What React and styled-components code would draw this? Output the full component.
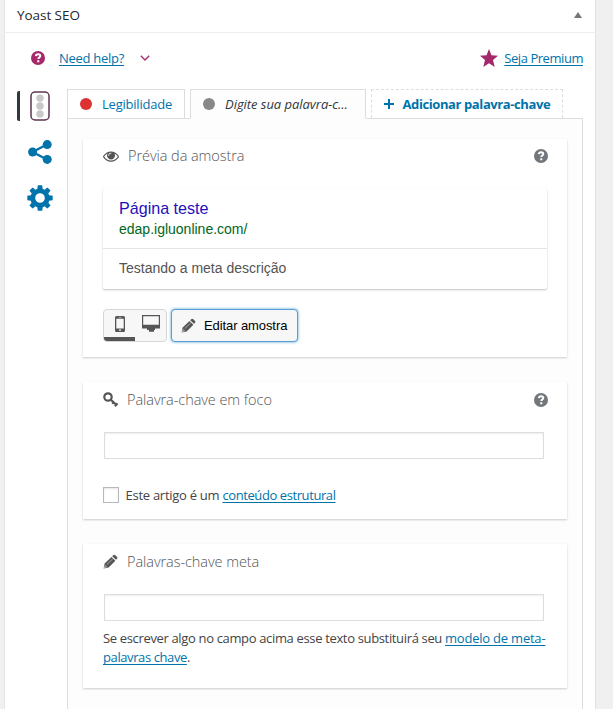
import React from 'react';
import styled, { createGlobalStyle, css } from 'styled-components';

const GlobalStyle = createGlobalStyle`
  * { box-sizing: border-box; }
  html, body { margin: 0; padding: 0; background: #f0f0f1; }
  body { font-family: "Open Sans", "Noto Sans", sans-serif; font-size: 13px; color: #444; overflow: hidden; }
`;

const Metabox = styled.section`
  display: flex;
  flex-direction: column;
  width: 592px;
  height: 709px;
  margin-left: 4px;
  background: #fff;
  border-left: 1px solid #e5e5e5;
  border-right: 1px solid #e2e2e2;
  overflow: hidden;
`;

const Header = styled.header`
  display: flex;
  flex: none;
  align-items: center;
  justify-content: space-between;
  height: 33px;
  padding: 0 13px 2px 12px;
  border-bottom: 1px solid #eee;
`;

const Title = styled.h2`
  margin: 0;
  font-size: 13.5px;
  font-weight: 400;
  line-height: 20px;
  letter-spacing: -0.05px;
  color: #23282d;
`;

const HelpBar = styled.div`
  display: flex;
  flex: none;
  align-items: center;
  height: 56px;
  padding: 0 12px 6px 26px;
`;

const HelpLinkGroup = styled.div`
  display: flex;
  align-items: center;
  margin-right: auto;
  gap: 14px;
`;

const PremiumGroup = styled.div`
  display: flex;
  align-items: center;
  gap: 6px;
`;

const Link = styled.a`
  color: #0073aa;
  font-size: 13px;
  line-height: 19px;
  letter-spacing: ${(p) => p.$spacing || 0}px;
  text-decoration: underline;
  text-underline-offset: 2px;
  text-decoration-thickness: 1px;
  text-decoration-skip-ink: none;
  white-space: nowrap;
`;

const Icon = styled.svg`
  display: block;
  flex: none;
  width: ${(p) => p.$w}px;
  height: ${(p) => p.$h || p.$w}px;
  color: ${(p) => p.$color || '#555'};
  fill: currentColor;
`;

const Body = styled.div`
  display: flex;
  flex: 1;
`;

const Sidebar = styled.nav`
  display: flex;
  flex: none;
  flex-direction: column;
  width: 62px;
  padding-top: 2px;
`;

const SidebarItem = styled.div`
  display: flex;
  align-items: center;
  justify-content: center;
  height: 30px;
  margin: 0 15px 16px 12px;
  padding-left: ${(p) => (p.$active ? 7 : 10)}px;
  border-left: ${(p) => (p.$active ? '3px solid #32373c' : '0')};
  border-radius: 2px 0 0 2px;
`;

const Main = styled.main`
  display: flex;
  flex: none;
  flex-direction: column;
  width: 516px;
`;

const TabBar = styled.div`
  display: flex;
  height: 30px;
  gap: 5px;
`;

const Tab = styled.div`
  display: flex;
  align-items: center;
  width: ${(p) => p.$width}px;
  height: 30px;
  padding: 0 0 0 12px;
  border: 1px solid #ddd;
  color: #0073aa;
  letter-spacing: ${(p) => p.$spacing || 0}px;
  white-space: nowrap;
  ${(p) => p.$kind === 'active' && css`
    border-bottom-color: #fdfdfd;
    background: #fdfdfd;
    color: #32373c;
    font-style: italic;
  `}
  ${(p) => p.$kind === 'add' && css`
    border-style: dashed;
    border-bottom: 0;
    height: 29px;
    font-weight: 700;
  `}
`;

const StatusDot = styled.span`
  width: 12px;
  height: 12px;
  margin-right: 10px;
  border-radius: 50%;
  background: ${(p) => p.$color};
`;

const TabLabel = styled.span`
  margin-left: ${(p) => p.$gap || 0}px;
`;

const Panel = styled.div`
  display: flex;
  flex: 1;
  flex-direction: column;
  gap: 25px;
  margin-top: -1px;
  padding: 20px 15px 0;
  border: 1px solid #ddd;
  border-bottom: 0;
  background: #fdfdfd;
`;

const TabBarLayer = styled.div`
  position: relative;
  z-index: 1;
`;

const Card = styled.section`
  height: ${(p) => p.$height}px;
  padding: 0 20px;
  background: #fff;
  box-shadow: 0 1px 2px rgba(0, 0, 0, 0.2);
`;

const CardHeader = styled.div`
  display: flex;
  align-items: center;
  height: ${(p) => p.$height || 35}px;
  margin-right: -1px;
`;

const CardTitle = styled.h3`
  flex: 1;
  margin: 0 0 0 ${(p) => p.$gap}px;
  color: #555;
  font-size: 14.5px;
  font-weight: 300;
  line-height: 22px;
  letter-spacing: -0.06px;
`;

const Snippet = styled.div`
  height: 101px;
  margin-top: 16px;
  border-radius: 2px;
  background: #fff;
  box-shadow: 0 1px 2px rgba(0, 0, 0, 0.24);
  font-family: "Liberation Sans", Arial, sans-serif;
`;

const SnippetTop = styled.div`
  height: 61px;
  padding: 11px 16px 0;
  border-bottom: 1px solid #e5e5e5;
`;

const SnippetTitle = styled.div`
  color: #1e0fbe;
  font-size: 16.1px;
  line-height: 18px;
`;

const SnippetUrl = styled.div`
  color: #006621;
  font-size: 14px;
  line-height: 20px;
  margin-top: 2px;
`;

const SnippetDescription = styled.div`
  padding: 9px 16px;
  color: #545454;
  font-size: 14px;
  line-height: 20px;
`;

const Actions = styled.div`
  display: flex;
  gap: 4px;
  margin-top: 20px;
`;

const DeviceSwitch = styled.div`
  display: flex;
  width: 64px;
  height: 33px;
  border: 1px solid #d6d6d6;
  border-radius: 4px;
  background: #f7f7f7;
  overflow: hidden;
`;

const DeviceButton = styled.div`
  display: flex;
  flex: 1;
  align-items: center;
  justify-content: center;
  height: 31px;
  border-bottom: 4px solid ${(p) => (p.$active ? '#555' : 'transparent')};
`;

const EditButton = styled.button`
  display: flex;
  align-items: center;
  gap: 8px;
  width: 127px;
  height: 33px;
  padding: 0 0 0 9px;
  border: 1px solid #5b9dd9;
  border-radius: 4px;
  background: #f7f7f7;
  box-shadow: 0 0 3px rgba(30, 140, 190, 0.8);
  color: #000;
  font: 13px "Liberation Sans", Arial, sans-serif;
  letter-spacing: -0.09px;
  white-space: nowrap;
`;

const TextInput = styled.input`
  display: block;
  width: 440px;
  height: 27px;
  margin: ${(p) => p.$top}px 0 0 1px;
  border: 1px solid #ddd;
  background: #fff;
  box-shadow: inset 0 1px 2px rgba(0, 0, 0, 0.07);
  outline: 0;
`;

const CheckRow = styled.label`
  display: flex;
  align-items: center;
  height: 20px;
  margin-top: 26px;
  letter-spacing: -0.27px;
  white-space: pre;
`;

const Checkbox = styled.span`
  width: 16px;
  height: 16px;
  margin-right: 6.5px;
  border: 1px solid #b4b9be;
  background: #fff;
  box-shadow: inset 0 1px 2px rgba(0, 0, 0, 0.1);
`;

const Note = styled.p`
  margin: 8px 0 0;
  line-height: 19px;
  letter-spacing: -0.345px;
  white-space: nowrap;
`;

const QuestionIcon = ({ color }) => (
  <Icon $w={14} $color={color} viewBox="0 0 14 14">
    <circle cx="7" cy="7" r="7" />
    <path d="M4.8 5.1C5 3.8 5.8 3.2 7.1 3.2c1.3 0 2.2.7 2.2 1.8 0 1.5-2 1.6-2 3.1" fill="none" stroke="#fff" strokeWidth="1.9" />
    <rect x="6.2" y="9.2" width="2.1" height="2.1" rx=".4" fill="#fff" />
  </Icon>
);

const ChevronIcon = () => (
  <Icon $w={12} $h={6} $color="#a4286a" viewBox="-2 0 12 6">
    <path d="M.8.8 5 5 9.2.8" fill="none" stroke="currentColor" strokeWidth="1.3" />
  </Icon>
);

const StarIcon = () => (
  <Icon $w={18} $color="#a4286a" viewBox="0 0 18 18">
    <path d="m9 0 2.5 6.2 6.5.5-5 4.3 1.7 7L9 14.2 3.3 18 5 11 0 6.7l6.5-.5z" />
  </Icon>
);

const TriangleIcon = () => (
  <Icon $w={8} $h={6} $color="#72777c" viewBox="0 0 8 6">
    <path d="M4 0 8 6H0z" />
  </Icon>
);

const TrafficLightIcon = () => (
  <Icon $w={20} $h={30} $color="#c8c8c8" viewBox="0 0 20 30">
    <rect x="1" y="1" width="18" height="28" rx="4" fill="#fff" stroke="#5d3752" strokeWidth="1.5" />
    <circle cx="10" cy="7.1" r="3.7" />
    <circle cx="10" cy="15" r="3.7" />
    <circle cx="10" cy="22.9" r="3.7" />
  </Icon>
);

const ShareIcon = () => (
  <Icon $w={24} $color="#0073aa" viewBox="0 0 24 24">
    <path d="m19 4.5-14.5 7.5L19 19.5" fill="none" stroke="currentColor" strokeWidth="2.3" />
    <circle cx="4.6" cy="12" r="4.5" />
    <circle cx="19.2" cy="4.6" r="4.5" />
    <circle cx="19.2" cy="19.4" r="4.5" />
  </Icon>
);

const GearIcon = () => (
  <Icon $w={26} $color="#0073aa" viewBox="-13 -13 26 26">
    <circle r="7.2" fill="none" stroke="currentColor" strokeWidth="4.8" />
    {[0, 45, 90, 135, 180, 225, 270, 315].map((angle) => (
      <path key={angle} d="M-2.7-9-2.2-12.7H2.2L2.7-9z" transform={`rotate(${angle})`} />
    ))}
  </Icon>
);

const PlusIcon = () => (
  <Icon $w={10} $color="#0073aa" viewBox="0 0 10 10">
    <path d="M4 0h2v4h4v2H6v4H4V6H0V4h4z" />
  </Icon>
);

const EyeIcon = () => (
  <Icon $w={16} viewBox="0 0 1792 1792">
    <path d="M1664 960q-152-236-381-353 61 104 61 225 0 185-131.5 316.5t-316.5 131.5-316.5-131.5-131.5-316.5q0-121 61-225-229 117-381 353 133 205 333.5 326.5t434.5 121.5 434.5-121.5 333.5-326.5zm-720-384q0-20-14-34t-34-14q-125 0-214.5 89.5t-89.5 214.5q0 20 14 34t34 14 34-14 14-34q0-86 61-147t147-61q20 0 34-14t14-34zm848 384q0 34-20 69-140 230-376.5 368.5t-499.5 138.5-499.5-139-376.5-368q-20-35-20-69t20-69q140-229 376.5-368t499.5-139 499.5 139 376.5 368q20 35 20 69z" />
  </Icon>
);

const PencilIcon = () => (
  <Icon $w={15} viewBox="0 0 15 15">
    <path d="M10.2 1.3q1-1 2-.1l1.9 1.8q.8.9-.1 1.8l-1 1L9.2 2.3z" />
    <path d="m8.5 3 3.9 3.7-6.8 6.7L.6 14.5 1.7 9.6z" />
    <path d="m3.8 10.6 5.9-5.7M1.2 13.9l1.1-2.2 1.2 1.1z" fill="none" stroke="#fff" strokeWidth=".5" />
  </Icon>
);

const KeyIcon = () => (
  <Icon $w={16} $h={15} viewBox="0 0 16 15">
    <circle cx="5" cy="5" r="3.7" fill="none" stroke="currentColor" strokeWidth="2.2" />
    <path d="m7 6.9 7.1 6.6M9.2 11.8l2.1-2.3M11.9 14.2l2.6-2.8" fill="none" stroke="currentColor" strokeWidth="2.1" />
  </Icon>
);

const PhoneIcon = () => (
  <Icon $w={10} $h={16} viewBox="0 0 10 16">
    <path fillRule="evenodd" d="M1.5 0h7Q10 0 10 1.5v13Q10 16 8.5 16h-7Q0 16 0 14.5v-13Q0 0 1.5 0zM1.3 2.7v9.8h7.4V2.7zM3.5 1v.6h3V1zM4 13.6v1.2h2v-1.2z" />
  </Icon>
);

const DesktopIcon = () => (
  <Icon $w={18} $h={17} viewBox="0 0 18 17">
    <path fillRule="evenodd" d="M0 0h18v13.5h-5V15h-1v1.8H7V15H5v-1.5H0zM1.2 1.2v8.6h15.6V1.2z" />
  </Icon>
);

export default function App() {
  return (
    <>
      <GlobalStyle />
      <Metabox>
        <Header>
          <Title>Yoast SEO</Title>
          <TriangleIcon />
        </Header>
        <HelpBar>
          <HelpLinkGroup>
            <QuestionIcon color="#a4286a" />
            <Link $spacing={-0.28}>Need help?</Link>
            <ChevronIcon />
          </HelpLinkGroup>
          <PremiumGroup>
            <StarIcon />
            <Link $spacing={-0.45}>Seja Premium</Link>
          </PremiumGroup>
        </HelpBar>
        <Body>
          <Sidebar>
            <SidebarItem $active><TrafficLightIcon /></SidebarItem>
            <SidebarItem><ShareIcon /></SidebarItem>
            <SidebarItem><GearIcon /></SidebarItem>
          </Sidebar>
          <Main>
            <TabBarLayer>
              <TabBar>
                <Tab $width={118} $spacing={-0.22}>
                  <StatusDot $color="#dc3232" />
                  <TabLabel>Legibilidade</TabLabel>
                </Tab>
                <Tab $width={176} $kind="active" $spacing={-0.04}>
                  <StatusDot $color="#888" />
                  <TabLabel>Digite sua palavra-c...</TabLabel>
                </Tab>
                <Tab $width={192} $kind="add" $spacing={-0.4}>
                  <PlusIcon />
                  <TabLabel $gap={8.5}>Adicionar palavra-chave</TabLabel>
                </Tab>
              </TabBar>
            </TabBarLayer>
            <Panel>
              <Card $height={218}>
                <CardHeader $height={33}>
                  <EyeIcon />
                  <CardTitle $gap={9}>Prévia da amostra</CardTitle>
                  <QuestionIcon color="#72777c" />
                </CardHeader>
                <Snippet>
                  <SnippetTop>
                    <SnippetTitle>Página teste</SnippetTitle>
                    <SnippetUrl>edap.igluonline.com/</SnippetUrl>
                  </SnippetTop>
                  <SnippetDescription>Testando a meta descrição</SnippetDescription>
                </Snippet>
                <Actions>
                  <DeviceSwitch>
                    <DeviceButton $active><PhoneIcon /></DeviceButton>
                    <DeviceButton><DesktopIcon /></DeviceButton>
                  </DeviceSwitch>
                  <EditButton><PencilIcon />Editar amostra</EditButton>
                </Actions>
              </Card>
              <Card $height={137}>
                <CardHeader>
                  <KeyIcon />
                  <CardTitle $gap={8}>Palavra-chave em foco</CardTitle>
                  <QuestionIcon color="#72777c" />
                </CardHeader>
                <TextInput $top={15} />
                <CheckRow>
                  <Checkbox />
                  Este artigo é um <Link $spacing={-0.41}>conteúdo estrutural</Link>
                </CheckRow>
              </Card>
              <Card $height={144}>
                <CardHeader>
                  <PencilIcon />
                  <CardTitle $gap={9}>Palavras-chave meta</CardTitle>
                </CardHeader>
                <TextInput $top={15} />
                <Note>
                  Se escrever algo no campo acima esse texto substituirá seu{' '}
                  <Link $spacing={-0.22}>modelo de meta-</Link>
                  <br />
                  <Link $spacing={-0.4}>palavras chave</Link>.
                </Note>
              </Card>
            </Panel>
          </Main>
        </Body>
      </Metabox>
    </>
  );
}
